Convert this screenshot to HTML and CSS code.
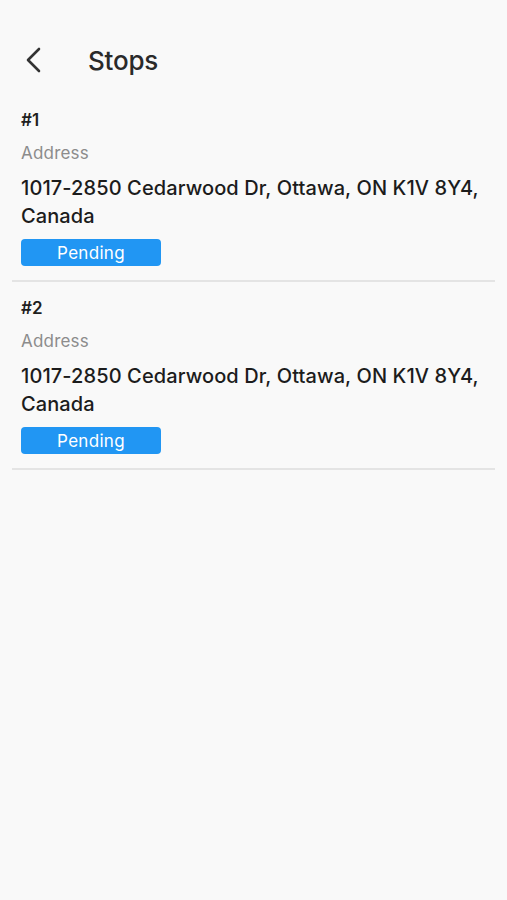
FILE: index.html
```html
<!DOCTYPE html>
<html>
<head>
    <title>Stops</title>
    <link rel="stylesheet" href="styles.css">
</head>
<body>
    <div class="screen">
        <div class="header">
            <button class="back" aria-label="Back">
                <svg width="24" height="30" viewBox="0 0 24 30">
                    <path d="M17 4 L6 15 L17 26" fill="none" stroke="#333" stroke-width="2.6" stroke-linecap="round" stroke-linejoin="round"/>
                </svg>
            </button>
            <h1>Stops</h1>
        </div>

        <div class="stops">
            <div class="stop">
                <div class="stop-number">#1</div>
                <div class="stop-label">Address</div>
                <div class="stop-address">1017-2850 Cedarwood Dr, Ottawa, ON K1V 8Y4, Canada</div>
                <div class="status">Pending</div>
            </div>
            <div class="stop">
                <div class="stop-number">#2</div>
                <div class="stop-label">Address</div>
                <div class="stop-address">1017-2850 Cedarwood Dr, Ottawa, ON K1V 8Y4, Canada</div>
                <div class="status">Pending</div>
            </div>
        </div>
    </div>
</body>
</html>
```

FILE: styles.css
```css
body {
    margin: 0;
    font-family: 'Inter', 'Noto Sans', sans-serif;
    background-color: #f9f9f9;
    color: #1f1f1f;
}

.screen {
    min-height: 900px;
}

.header {
    display: flex;
    align-items: center;
    height: 94px;
    padding: 26px 0 0 22px;
    box-sizing: border-box;
}

.back {
    display: flex;
    align-items: center;
    justify-content: center;
    width: 24px;
    height: 30px;
    padding: 0;
    border: none;
    background: none;
    cursor: pointer;
}

h1 {
    margin: 0 0 0 42px;
    font-size: 26px;
    font-weight: 500;
    color: #2a2a2a;
    letter-spacing: -0.2px;
}

.stops {
    margin: 0 12px;
}

.stop {
    padding: 14px 9px;
    border-bottom: 2px solid #e4e4e4;
}

.stop-number {
    font-size: 17px;
    font-weight: 600;
    line-height: 24px;
}

.stop-label {
    margin-top: 9px;
    font-size: 17px;
    line-height: 24px;
    color: #8c8c8c;
    letter-spacing: 0.2px;
}

.stop-address {
    margin-top: 9px;
    font-size: 20px;
    font-weight: 500;
    line-height: 28px;
    color: #1c1c1c;
    letter-spacing: 0.1px;
}

.status {
    margin-top: 9px;
    width: 140px;
    height: 27px;
    border-radius: 4px;
    background-color: #2196f3;
    color: #fff;
    font-size: 17px;
    line-height: 28px;
    text-align: center;
    letter-spacing: 0.3px;
}
```
